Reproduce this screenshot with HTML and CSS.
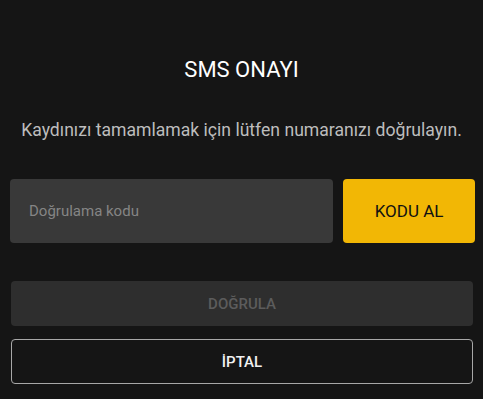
FILE: index.html
```
<!DOCTYPE html>
<html lang="tr">
<head>
    <meta charset="UTF-8"/>
    <meta name="viewport" content="width=device-width, initial-scale=1.0"/>
    <title>SMS Onayı</title>
    <link rel="stylesheet" href="styles.css">
</head>
<body>
<div class="sms-dialog">
    <h3 class="title">SMS ONAYI</h3>
    <p class="subtitle">Kaydınızı tamamlamak için lütfen numaranızı doğrulayın.</p>

    <div class="code-row">
        <input class="code-input" type="text" placeholder="Doğrulama kodu"/>
        <button class="btn btn-yellow">KODU AL</button>
    </div>

    <button class="btn btn-wide btn-disabled">DOĞRULA</button>
    <button class="btn btn-wide btn-outline">İPTAL</button>
</div>
</body>
</html>
```

FILE: styles.css
```
body {
    margin: 0;
    background-color: #151515;
    font-family: Roboto, "Liberation Sans", sans-serif;
}

.sms-dialog {
    padding: 0 10px 0 10px;
    display: flex;
    flex-direction: column;
}

.title {
    margin: 56px 0 0 0;
    font-size: 22px;
    font-weight: 400;
    color: #fff;
    text-align: center;
    line-height: 28px;
}

.subtitle {
    margin: 34px 0 0 0;
    font-size: 17.6px;
    color: #bdbdbd;
    text-align: center;
    line-height: 24px;
}

.code-row {
    display: flex;
    gap: 10px;
    margin-top: 37px;
    height: 64px;
}

.code-input {
    flex: 1;
    border: none;
    border-radius: 4px;
    background-color: #393939;
    padding: 0 19px;
    font-family: inherit;
    font-size: 15px;
    color: #ddd;
    outline: none;
}

.code-input::placeholder {
    color: #858585;
}

.btn {
    font-family: inherit;
    border-radius: 4px;
    cursor: pointer;
}

.btn-yellow {
    width: 132px;
    margin-right: -2px;
    border: none;
    background-color: #f2b705;
    color: #111;
    font-size: 17px;
}

.btn-wide {
    margin: 0 0 0 1px;
    height: 45px;
    font-size: 15px;
    font-weight: 500;
}

.btn-disabled {
    margin-top: 38px;
    border: none;
    background-color: #2e2e2e;
    color: #5c5c5c;
}

.btn-outline {
    margin-top: 13px;
    border: 1px solid #a8a8a8;
    background-color: transparent;
    color: #f2f2f2;
}
```
